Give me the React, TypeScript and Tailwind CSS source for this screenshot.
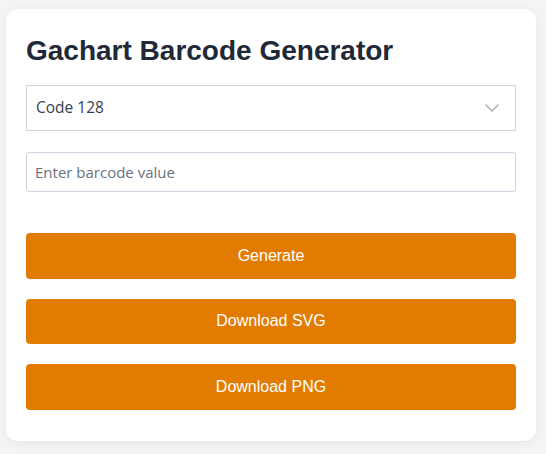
import { useState } from 'react'

const buttons = ['Generate', 'Download SVG', 'Download PNG']

function Chevron() {
  return (
    <svg width="14" height="14" viewBox="0 0 14 14" fill="none" className="text-[#aab0b6]">
      <polyline points="0.5,3.5 7,10 13.5,3.5" stroke="currentColor" strokeWidth="1.5" />
    </svg>
  )
}

export default function App() {
  const [value, setValue] = useState('')

  return (
    <div className="min-h-screen bg-[#f3f4f6] px-[6px] pt-[9px] font-['Liberation_Sans',Arial,sans-serif]">
      <div className="w-[530px] rounded-[12px] bg-white px-5 pt-[26px] pb-[31px] shadow-[0_2px_10px_rgba(0,0,0,0.06)]">
        <h1 className="mb-[18px] text-[28px] leading-[32px] font-bold text-[#1f2937]">
          Gachart Barcode Generator
        </h1>
        <div className="flex h-[46px] items-center justify-between border border-[#cbd5e1] pr-[16px] pl-[9px] font-['Open_Sans',sans-serif] text-[15.5px] text-[#374151]">
          <span>Code 128</span>
          <Chevron />
        </div>
        <input
          className="mt-[21px] block h-10 w-full rounded-[3px] border border-[#cbd5e1] px-[8px] font-['Open_Sans',sans-serif] text-[15px] text-[#374151] outline-none placeholder:text-[#6b7280]"
          placeholder="Enter barcode value"
          value={value}
          onChange={e => setValue(e.target.value)}
        />
        <div className="mt-[41px] flex flex-col gap-5">
          {buttons.map(label => (
            <button
              key={label}
              className="h-[45.5px] w-full rounded-[4px] bg-[#e27c00] text-[16px] text-white"
            >
              {label}
            </button>
          ))}
        </div>
      </div>
    </div>
  )
}
